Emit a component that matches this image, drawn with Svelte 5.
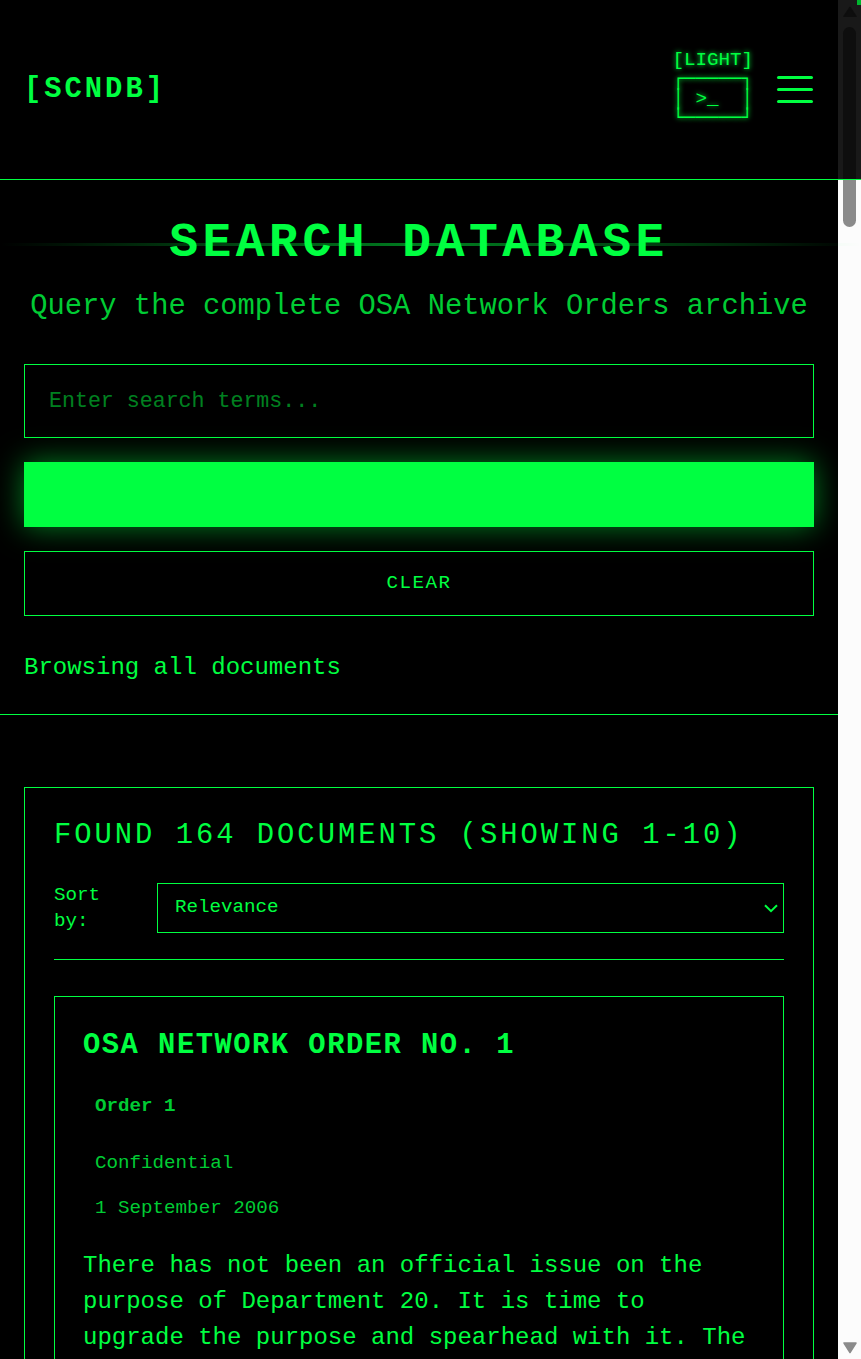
<script>
  const order = {
    title: 'OSA NETWORK ORDER NO. 1',
    number: 'Order 1',
    level: 'Confidential',
    date: '1 September 2006',
    text: 'There has not been an official issue on the purpose of Department 20. It is time to upgrade the purpose and spearhead with it. The'
  };
  const themeArt = '[LIGHT]\n┌─────┐\n│ >_  │\n└─────┘';
</script>

<div class="page">
  <header>
    <span class="logo">[SCNDB]</span>
    <div class="tools">
      <pre class="theme">{themeArt}</pre>
      <div class="burger"><i></i><i></i><i></i></div>
    </div>
  </header>

  <div class="body">
    <main>
      <section class="hero">
        <h1>SEARCH DATABASE</h1>
        <p class="sub">Query the complete OSA Network Orders archive</p>
        <input type="text" placeholder="Enter search terms..." />
        <button class="go" aria-label="Search"></button>
        <button class="clear">CLEAR</button>
        <p class="status">Browsing all documents</p>
      </section>

      <section class="results">
        <h2>FOUND 164 DOCUMENTS (SHOWING 1-10)</h2>
        <div class="sort">
          <span class="label">Sort by:</span>
          <div class="select">
            <span>Relevance</span>
            <svg width="14" height="9" viewBox="0 0 14 9"><path d="M1 1.2 L7 7.2 L13 1.2" fill="none" stroke="#00ff41" stroke-width="2" /></svg>
          </div>
        </div>
        <article>
          <h3>{order.title}</h3>
          <p class="meta num">{order.number}</p>
          <p class="meta level">{order.level}</p>
          <p class="meta date">{order.date}</p>
          <p class="text">{order.text}</p>
        </article>
      </section>
    </main>
    <aside class="track">
      <div class="thumb"></div>
      <svg width="16" height="12" viewBox="0 0 16 12"><path d="M2 1 H14 L8 10.5 Z" fill="#8b8b8b" stroke="#8b8b8b" stroke-width="1.5" stroke-linejoin="round" /></svg>
    </aside>
  </div>

  <div class="headtrack">
    <svg width="16" height="12" viewBox="0 0 16 12"><path d="M8 1.5 L14 10.3 H2 Z" fill="#0e0e0e" stroke="#0e0e0e" stroke-width="1.5" stroke-linejoin="round" /></svg>
    <div class="headthumb"></div>
  </div>
  <div class="corner"></div>
  <div class="scan"></div>
</div>

<style>
  :global(body) { background: #000; overflow: hidden; }
  .page {
    position: relative;
    width: 861px;
    height: 1359px;
    overflow: hidden;
    background: #000;
    color: #00ff41;
    font-family: "Courier New", "Liberation Mono", monospace;
    font-size: 24px;
    line-height: 36px;
  }
  .page * { box-sizing: border-box; }
  h1, h2, h3, p, pre { margin: 0; }
  header {
    height: 180px;
    border-bottom: 1px solid #00ff41;
    display: flex;
    justify-content: space-between;
    align-items: center;
    padding: 0 48px 0 24px;
  }
  .logo { font-size: 28.8px; font-weight: 700; letter-spacing: 3px; }
  .tools { display: flex; align-items: center; gap: 24px; }
  .theme {
    font-family: inherit;
    font-size: 19.2px;
    line-height: 19.2px;
    text-shadow: 0 0 5px #00ff41;
  }
  .burger { width: 36px; display: flex; flex-direction: column; gap: 9px; }
  .burger i { height: 3px; background: #00ff41; border-radius: 1.5px; }
  .body { display: flex; height: 1179px; }
  main { width: 838px; flex: none; overflow: hidden; }
  .hero {
    height: 535px;
    padding: 36px 24px 0;
    border-bottom: 1px solid #00ff41;
    display: flex;
    flex-direction: column;
  }
  h1 {
    font-size: 48px;
    line-height: 54px;
    letter-spacing: 4.5px;
    text-align: center;
  }
  .sub { font-size: 28.8px; line-height: 40px; margin-top: 17px; text-align: center; color: #00cc34; white-space: nowrap; }
  input {
    margin-top: 37px;
    height: 74px;
    flex: none;
    border: 1px solid #00ff41;
    border-radius: 0;
    background: #000;
    color: #00ff41;
    padding: 0 24px;
    font: 21.6px "Courier New", "Liberation Mono", monospace;
  }
  input::placeholder { color: #00ff41; opacity: .5; }
  button {
    height: 65px;
    flex: none;
    margin-top: 24px;
    border: 1px solid #00ff41;
    background: transparent;
    color: #00ff41;
    padding: 0 0 2px;
    font: 19.2px "Courier New", "Liberation Mono", monospace;
    letter-spacing: 1.5px;
  }
  .go { background: #00ff41; box-shadow: 0 0 30px rgba(0, 255, 65, .5); }
  .status { margin-top: 34px; }
  .results {
    margin: 72px 24px 0;
    height: 640px;
    border: 1px solid #00ff41;
    padding: 30px 29px 0;
  }
  h2 { font-size: 28.8px; font-weight: 400; letter-spacing: 3px; white-space: nowrap; }
  .sort {
    height: 106px;
    padding-top: 29px;
    display: flex;
    border-bottom: 1px solid #00ff41;
    font-size: 19.2px;
    line-height: 26px;
  }
  .label { width: 103px; padding-right: 40px; margin-top: -1px; flex: none; }
  .select {
    flex: 1;
    height: 50px;
    border: 1px solid #00ff41;
    display: flex;
    align-items: center;
    justify-content: space-between;
    padding: 0 5px 0 17px;
  }
  .select span { margin-top: -2px; }
  article { margin-top: 36px; border: 1px solid #00ff41; padding: 30px 28px; height: 500px; }
  h3 { font-size: 28.8px; line-height: 38px; letter-spacing: 1.5px; }
  .meta { font-size: 19.2px; line-height: 26px; padding-left: 12px; color: #00cc34; }
  .num { font-weight: 700; margin-top: 28px; }
  .level { margin-top: 31px; }
  .date { margin-top: 19px; }
  .text { margin-top: 27px; }
  .track {
    width: 23px;
    background: #fcfcfc;
    display: flex;
    flex-direction: column;
    align-items: center;
    justify-content: space-between;
    padding-bottom: 5px;
  }
  .thumb { width: 13px; height: 47px; background: #8b8b8b; border-radius: 0 0 6.5px 6.5px; }
  .headtrack {
    position: absolute;
    right: 0;
    top: 0;
    width: 23px;
    height: 179px;
    background: #191919;
    display: flex;
    flex-direction: column;
    align-items: center;
    padding-top: 6px;
  }
  .headthumb { width: 13px; flex: 1; margin-top: 9px; background: #0e0e0e; border-radius: 6.5px 6.5px 0 0; }
  .corner {
    position: absolute;
    right: 0;
    top: 0;
    width: 4px;
    height: 5px;
    background: #00b52e;
  }
  .scan {
    position: absolute;
    left: 0;
    top: 243px;
    width: 861px;
    height: 3px;
    background: linear-gradient(90deg, transparent, #00ff41, transparent);
    opacity: .5;
  }
</style>
